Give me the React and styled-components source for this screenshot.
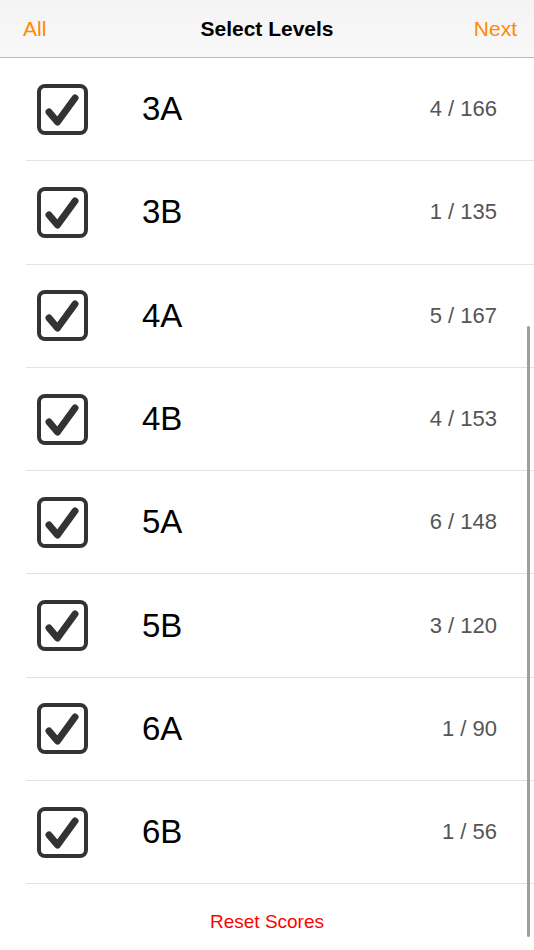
import React from "react";
import styled, { createGlobalStyle } from "styled-components";

const levels = [
  { name: "3A", score: "4 / 166" },
  { name: "3B", score: "1 / 135" },
  { name: "4A", score: "5 / 167" },
  { name: "4B", score: "4 / 153" },
  { name: "5A", score: "6 / 148" },
  { name: "5B", score: "3 / 120" },
  { name: "6A", score: "1 / 90" },
  { name: "6B", score: "1 / 56" },
];

export default function App() {
  return (
    <Screen>
      <GlobalStyle />
      <NavBar>
        <NavButton>All</NavButton>
        <NavTitle>Select Levels</NavTitle>
        <NavButton $right>Next</NavButton>
      </NavBar>
      <List>
        {levels.map((l) => (
          <Row key={l.name}>
            <CheckBox />
            <Label>{l.name}</Label>
            <Score>{l.score}</Score>
          </Row>
        ))}
      </List>
      <Footer>
        <ResetButton>Reset Scores</ResetButton>
      </Footer>
      <ScrollBar />
    </Screen>
  );
}

function CheckBox() {
  return (
    <Box>
      <svg width="51" height="51" viewBox="0 0 51 51">
        <rect x="2" y="2" width="47" height="47" rx="6" fill="none" stroke="#333" strokeWidth="4" />
        <path d="M12 28 L20.5 38 L38 14" fill="none" stroke="#333" strokeWidth="7" strokeLinecap="round" strokeLinejoin="round" />
      </svg>
    </Box>
  );
}

const GlobalStyle = createGlobalStyle`
  body {
    margin: 0;
    background: #fff;
    font-family: "Liberation Sans", Arial, sans-serif;
  }
`;

const Screen = styled.div`
  position: relative;
  width: 534px;
  height: 950px;
  overflow: hidden;
  background: #fff;
`;

const NavBar = styled.div`
  height: 57px;
  border-bottom: 1px solid #b9b9b9;
  background: linear-gradient(#f4f4f4, #f8f8f8);
  display: grid;
  grid-template-columns: 1fr auto 1fr;
  align-items: center;
  padding: 0 17px;
`;

const NavButton = styled.div`
  color: #ff8a00;
  font-size: 21px;
  text-align: ${(p) => (p.$right ? "right" : "left")};
  margin-left: ${(p) => (p.$right ? "0" : "6px")};
`;

const NavTitle = styled.div`
  font-size: 21px;
  font-weight: bold;
  color: #000;
`;

const List = styled.div`
  display: flex;
  flex-direction: column;
`;

const Row = styled.div`
  box-sizing: border-box;
  height: 103.3px;
  margin-left: 26px;
  padding: 0 37px 0 11px;
  border-bottom: 1px solid #e2e2e2;
  display: flex;
  align-items: center;
`;

const Box = styled.div`
  width: 51px;
  height: 51px;
  display: flex;
  svg {
    display: block;
  }
`;

const Label = styled.div`
  margin-left: 54px;
  font-size: 33px;
  color: #000;
  flex: 1;
`;

const Score = styled.div`
  font-size: 22px;
  color: #555;
`;

const Footer = styled.div`
  display: flex;
  justify-content: center;
  padding-top: 27px;
`;

const ResetButton = styled.div`
  color: #ff0000;
  font-size: 19px;
`;

const ScrollBar = styled.div`
  position: absolute;
  right: 4px;
  top: 326px;
  width: 3px;
  height: 611px;
  border-radius: 2px;
  background: #9e9e9e;
`;
